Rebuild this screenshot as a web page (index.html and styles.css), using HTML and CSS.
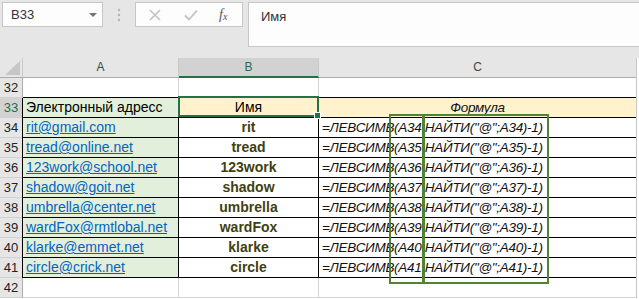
FILE: index.html
```html
<!DOCTYPE html>
<html lang="ru">
<head>
    <meta charset="UTF-8">
    <title>Электронный адресс</title>
    <link rel="stylesheet" href="styles.css">
</head>
<body>

    <div class="toolbar">
        <div class="name-box">
            <span>B33</span>
            <span class="arrow"></span>
        </div>
        <div class="grip">
            <svg width="4" height="14" viewBox="0 0 4 14"><circle cx="2" cy="2" r="1.2" fill="#b4b4b4"/><circle cx="2" cy="7" r="1.2" fill="#b4b4b4"/><circle cx="2" cy="12" r="1.2" fill="#b4b4b4"/></svg>
        </div>
        <div class="fn-box">
            <svg class="ico" width="14" height="14" viewBox="0 0 14 14"><path d="M2 2 L12 12 M12 2 L2 12" stroke="#c2c2c2" stroke-width="1.6" fill="none"/></svg>
            <svg class="ico" width="16" height="14" viewBox="0 0 16 14"><path d="M2 7.5 L6 11.5 L14 2.5" stroke="#c2c2c2" stroke-width="1.8" fill="none"/></svg>
            <span class="fx">f<sub>x</sub></span>
        </div>
        <div class="formula-bar">Имя</div>
    </div>

    <div class="sheet">
        <div class="grid">
            <div class="hd corner"><span class="tri"></span></div>
            <div class="hd">A</div>
            <div class="hd sel">B</div>
            <div class="hd">C</div>
            <div class="hd end"></div>

            <div class="rn">32</div>
            <div class="c top"></div>
            <div class="c top"></div>
            <div class="c top"></div>
            <div class="c end"></div>

            <div class="rn cur">33</div>
            <div class="c b green">Электронный адресс</div>
            <div class="c b cream mid">Имя</div>
            <div class="c b cream mid it">Формула</div>
            <div class="c end"></div>

            <div class="rn">34</div>
            <div class="c b green"><a href="#">rit@gmail.com</a></div>
            <div class="c b mid name">rit</div>
            <div class="c b it">=ЛЕВСИМВ(A34;НАЙТИ("@";A34)-1)</div>
            <div class="c end"></div>

            <div class="rn">35</div>
            <div class="c b green"><a href="#">tread@online.net</a></div>
            <div class="c b mid name">tread</div>
            <div class="c b it">=ЛЕВСИМВ(A35;НАЙТИ("@";A35)-1)</div>
            <div class="c end"></div>

            <div class="rn">36</div>
            <div class="c b green"><a href="#">123work@school.net</a></div>
            <div class="c b mid name">123work</div>
            <div class="c b it">=ЛЕВСИМВ(A36;НАЙТИ("@";A36)-1)</div>
            <div class="c end"></div>

            <div class="rn">37</div>
            <div class="c b green"><a href="#">shadow@goit.net</a></div>
            <div class="c b mid name">shadow</div>
            <div class="c b it">=ЛЕВСИМВ(A37;НАЙТИ("@";A37)-1)</div>
            <div class="c end"></div>

            <div class="rn">38</div>
            <div class="c b green"><a href="#">umbrella@center.net</a></div>
            <div class="c b mid name">umbrella</div>
            <div class="c b it">=ЛЕВСИМВ(A38;НАЙТИ("@";A38)-1)</div>
            <div class="c end"></div>

            <div class="rn">39</div>
            <div class="c b green"><a href="#">wardFox@rmtlobal.net</a></div>
            <div class="c b mid name">wardFox</div>
            <div class="c b it">=ЛЕВСИМВ(A39;НАЙТИ("@";A39)-1)</div>
            <div class="c end"></div>

            <div class="rn">40</div>
            <div class="c b green"><a href="#">klarke@emmet.net</a></div>
            <div class="c b mid name">klarke</div>
            <div class="c b it">=ЛЕВСИМВ(A40;НАЙТИ("@";A40)-1)</div>
            <div class="c end"></div>

            <div class="rn">41</div>
            <div class="c b green"><a href="#">circle@crick.net</a></div>
            <div class="c b mid name">circle</div>
            <div class="c b it">=ЛЕВСИМВ(A41;НАЙТИ("@";A41)-1)</div>
            <div class="c end"></div>

            <div class="rn">42</div>
            <div class="c"></div>
            <div class="c"></div>
            <div class="c"></div>
            <div class="c end"></div>
        </div>

        <!-- выделение ячейки и рамки поверх формул -->
        <div class="selection"><span class="handle"></span></div>
        <div class="mark mark-ref"></div>
        <div class="mark mark-find"></div>
    </div>

</body>
</html>
```

FILE: styles.css
```css
body {
    margin: 0;
    width: 639px;
    height: 299px;
    overflow: hidden;
    background-color: #ffffff;
    font-family: "Liberation Sans", Arial, sans-serif;
}

.toolbar {
    display: flex;
    align-items: flex-start;
    height: 58px;
    box-sizing: border-box;
    padding: 2px 0 0 2px;
    background-color: #e6e6e6;
    font-size: 13px;
    color: #333;
}

.name-box {
    display: flex;
    align-items: center;
    justify-content: space-between;
    width: 101px;
    height: 25px;
    box-sizing: border-box;
    padding: 0 5px 0 8px;
    background-color: #fdfdfd;
    border: 1px solid #c6c6c6;
}

.arrow {
    width: 0;
    height: 0;
    border-left: 4px solid transparent;
    border-right: 4px solid transparent;
    border-top: 4px solid #707070;
}

.grip {
    display: flex;
    align-items: center;
    height: 25px;
    padding: 0 14px 0 14px;
}

.fn-box {
    display: flex;
    align-items: center;
    gap: 21px;
    width: 108px;
    height: 25px;
    box-sizing: border-box;
    padding: 0 0 0 12px;
    background-color: #fdfdfd;
    border: 1px solid #c6c6c6;
}

.fx {
    font-family: "Liberation Serif", "DejaVu Serif", serif;
    font-style: italic;
    font-size: 14px;
    color: #555;
    margin-left: -1px;
}

.fx sub {
    font-size: 10px;
    vertical-align: -1px;
}

.formula-bar {
    flex: 1;
    height: 45px;
    box-sizing: border-box;
    margin-left: 5px;
    padding: 6px 0 0 12px;
    background-color: #fdfdfd;
    border: 1px solid #c6c6c6;
    border-right: none;
}

.sheet {
    position: relative;
}

.grid {
    display: grid;
    grid-template-columns: 23px 156px 140px 318px 2px;
    grid-auto-rows: 20px;
    font-size: 14px;
    line-height: 19px;
}

.grid > div {
    box-sizing: border-box;
    border-right: 1px solid #d4d4d4;
    border-bottom: 1px solid #d4d4d4;
    white-space: nowrap;
    overflow: visible;
}

.hd {
    background-color: #e6e6e6;
    text-align: center;
    font-size: 12px;
    color: #444;
    border-right-color: #c8c8c8 !important;
    border-bottom-color: #ababab !important;
}

.hd.sel {
    background-color: #d2d2d2;
    color: #217346;
    border-bottom: 2px solid #217346 !important;
    line-height: 18px;
}

.hd.end,
.grid > .end {
    background-color: #ffffff;
    border-right: none;
    border-left: 1px solid #c8c8c8;
    margin-left: -1px;
    border-bottom: none;
}

.corner {
    position: relative;
}

.tri {
    position: absolute;
    right: 2px;
    bottom: 2px;
    width: 0;
    height: 0;
    border-left: 15px solid transparent;
    border-bottom: 14px solid #c6c6c6;
}

.rn {
    background-color: #e6e6e6;
    color: #222;
    font-size: 13px;
    text-align: center;
    border-right-color: #ababab !important;
    border-bottom-color: #d0d0d0 !important;
}

.rn.cur {
    background-color: #d2d2d2;
    color: #217346;
}

.c {
    padding-left: 3px;
}

.c.top {
    border-bottom-color: #000 !important;
}

.c.b {
    border-right-color: #000;
    border-bottom-color: #000;
}

.green {
    background-color: #e2efda;
    border-left: 1px solid #000;
    margin-left: -1px;
}

.cream {
    background-color: #fff2cc;
}

.mid {
    text-align: center;
    padding-left: 0;
}

.it {
    font-style: italic;
    font-size: 13.5px;
    color: #111;
    letter-spacing: -0.3px;
}

.name {
    font-weight: bold;
    color: #3f3f12;
}

.c a {
    color: #0563c1;
    text-decoration: underline;
}

.selection {
    position: absolute;
    left: 178px;
    top: 38px;
    width: 141px;
    height: 21px;
    box-sizing: border-box;
    border: 2px solid #217346;
}

.handle {
    position: absolute;
    right: -4px;
    bottom: -4px;
    width: 5px;
    height: 5px;
    background-color: #217346;
    border: 1px solid #ffffff;
}

.mark {
    position: absolute;
    top: 56px;
    height: 170px;
    box-sizing: border-box;
    border: 2px solid #548235;
}

.mark-ref {
    left: 389px;
    width: 35px;
}

.mark-find {
    left: 423px;
    width: 126px;
}
```
